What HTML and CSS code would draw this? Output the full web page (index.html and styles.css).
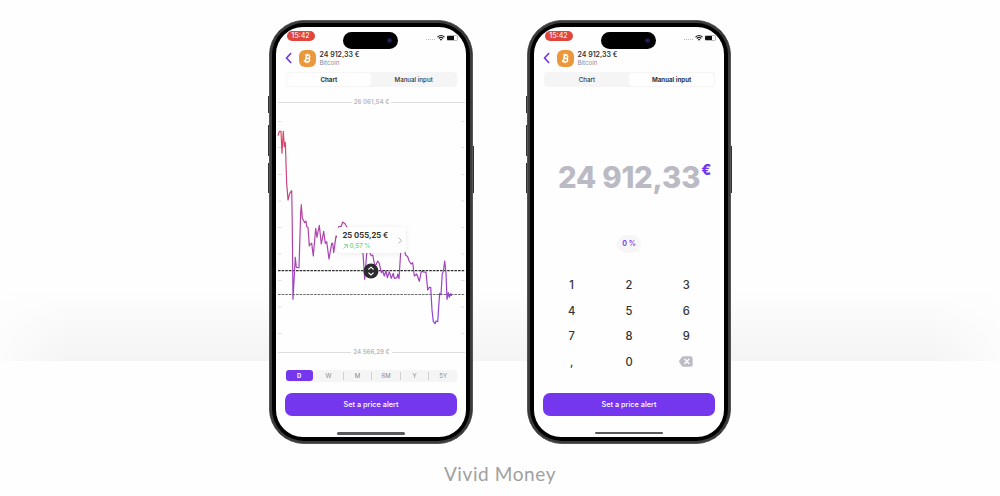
FILE: index.html
```html
<!DOCTYPE html>
<html lang="en">

<head>
    <meta charset="utf-8">
    <meta name="viewport" content="width=device-width, initial-scale=1.0">
    <title>Vivid Money</title>
    <link rel="stylesheet" href="styles.css">
</head>

<body>

    <!-- icons used on both phones -->
    <svg class="sprite" width="0" height="0">
        <symbol id="wifi" viewBox="0 0 16 12">
            <path d="M1 4.200C5 .4 11 .4 15 4.200M3.500 7c2.600-2.400 6.400-2.400 9 0" fill="none" stroke="#222" stroke-width="2.300" />
            <path d="M5.500 8.800c1.500-1.300 3.500-1.300 5 0L8 11.500z" fill="#222" />
        </symbol>
        <symbol id="back" viewBox="0 0 7 12">
            <path d="M5.700 1.500 1.500 6l4.200 4.500" fill="none" stroke="#7437ee" stroke-width="1.700" stroke-linecap="round" stroke-linejoin="round" />
        </symbol>
        <symbol id="bitcoin" viewBox="0 0 17 17">
            <g transform="rotate(13 8.500 8.500)" fill="none" stroke="#fff">
                <path d="M6.900 5.300v6.400M5.500 5.300h3.400c2 0 2 3 0 3H7h2.200c2.300 0 2.300 3.400 0 3.400H5.500" stroke-width="1.400" />
                <path d="M7.400 3.700v1.500M9.200 3.700v1.500M7.400 11.800v1.500M9.200 11.800v1.500" stroke-width=".9" />
            </g>
        </symbol>
    </svg>

    <main>
        <section class="phones">

            <article class="phone">
                <span class="side-button action"></span>
                <span class="side-button volume-up"></span>
                <span class="side-button volume-down"></span>
                <span class="side-button power"></span>

                <div class="screen">
                    <div class="status">
                        <span class="time">15:42</span>
                        <span class="island"><i class="lens"></i></span>
                        <span class="signals">
                            <i class="dots"></i>
                            <svg class="wifi"><use href="#wifi" /></svg>
                            <i class="battery"></i>
                        </span>
                    </div>

                    <header>
                        <svg class="back"><use href="#back" /></svg>
                        <span class="coin"><svg width="17" height="17"><use href="#bitcoin" /></svg></span>
                        <div>
                            <h2>24 912,33 €</h2>
                            <p>Bitcoin</p>
                        </div>
                    </header>

                    <nav class="tabs">
                        <span class="selected">Chart</span>
                        <span>Manual input</span>
                    </nav>

                    <div class="chart">
                        <div class="limit"><span>26 061,54 €</span></div>

                        <svg class="graph" viewBox="276 107 190 240" width="190" height="240">
                            <defs>
                                <linearGradient id="heat" gradientUnits="userSpaceOnUse" x1="0" y1="130" x2="0" y2="325">
                                    <stop offset="0" stop-color="#dc4660" />
                                    <stop offset=".45" stop-color="#b544a2" />
                                    <stop offset=".8" stop-color="#9c42c4" />
                                    <stop offset="1" stop-color="#8b42d8" />
                                </linearGradient>
                            </defs>
                            <path class="ticks" d="M278 121.500h3.500M278 147.500h3.500M278 174.500h3.500M278 201h3.500M278 227.500h3.500M278 254h3.500M278 280.500h3.500M278 307h3.500M278 333.500h3.500M461 121.500h3.500M461 147.500h3.500M461 174.500h3.500M461 201h3.500M461 227.500h3.500M461 254h3.500M461 280.500h3.500M461 307h3.500M461 333.500h3.500" />
                            <path class="level now" d="M278 294.500h187" />
                            <path class="level" d="M278 270.600h187" />
                            <path class="price" stroke="url(#heat)" d="M278 135.700 279.300 131.300 281 131.300 282 153.300 283.300 131.300 284.300 146.700 285.300 142.300 286.700 183.300 288 200 289.700 193.300 291.700 190.700 292.200 220 293 299.300 295.300 257.300 296.300 267.300 299 267.700 300.700 212 301.300 204.700 302.300 218 304.700 222.700 306 221 306.700 226.700 308 227.300 309.300 246 310.300 244 311.700 243.300 313.300 256 315.700 228.300 317 237.300 319.300 225.300 321.300 244 323.700 231.300 325.300 243.300 326.700 241.700 329 259 331.700 243.300 332.700 243.300 333.700 252.700 336 236 337.300 237.300 338.700 226.700 341 226.700 342.700 222 345 223.700 346.700 226.700 350 238 358 240 363 253.300 364.700 279.300 366.700 253 369.300 252 371.300 255.700 372.700 255 375 266.700 377.700 261 379.300 263.300 381.300 272.700 382.700 271 384.300 276 386 270.700 387.300 277.700 389.300 271.700 391.300 278.300 393.300 273.300 394.300 278.300 397 277.700 397.700 274 399 278.700 400 263 400.700 251.700 402.500 245 404.700 251.700 405.700 255 407.700 256.700 409 260.700 411 264 412.700 262.700 414.300 276 416.700 274 419.300 281.300 421.300 271.300 426 272.300 427.700 290 429.300 287.300 430.700 287.300 432 310 433.300 321.700 435 323.700 436 321 437.700 321.700 438.700 306.700 439.700 293.300 441 294.700 442.300 273.300 443.300 271.700 444.700 261 446 273.300 447 299.300 448.300 292.700 449.300 297.300 450.300 294 451.700 294.700" />
                            <circle cx="451" cy="294.700" r="1.300" fill="#8b40d6" />
                            <circle cx="371" cy="271" r="7.500" fill="#2c2b2e" />
                            <path d="m368.400 269.500 2.600-2.300 2.600 2.300M368.400 272.700l2.600 2.300 2.600-2.300" fill="none" stroke="#fff" stroke-width="1.100" />
                        </svg>

                        <div class="limit"><span>24 566,29 €</span></div>

                        <div class="tooltip">
                            <div>
                                <strong>25 055,25 €</strong>
                                <small>
                                    <svg width="5" height="5" viewBox="0 0 5 5"><path d="M.5 4.500l3.700-3.700M1 .6h3.400V4" fill="none" stroke="#7fd67b" stroke-width=".9" /></svg>
                                    0,57 %
                                </small>
                            </div>
                            <svg width="4" height="7" viewBox="0 0 4 7"><path d="m.6.6 2.800 2.900L.6 6.400" fill="none" stroke="#a8a8b0" stroke-width=".9" /></svg>
                        </div>
                    </div>

                    <nav class="ranges">
                        <span class="selected">D</span>
                        <span>W</span>
                        <span>M</span>
                        <span>6M</span>
                        <span>Y</span>
                        <span>5Y</span>
                    </nav>

                    <button>Set a price alert</button>
                    <span class="home"></span>
                </div>
            </article>

            <article class="phone input">
                <span class="side-button action"></span>
                <span class="side-button volume-up"></span>
                <span class="side-button volume-down"></span>
                <span class="side-button power"></span>

                <div class="screen">
                    <div class="status">
                        <span class="time">15:42</span>
                        <span class="island"><i class="lens"></i></span>
                        <span class="signals">
                            <i class="dots"></i>
                            <svg class="wifi"><use href="#wifi" /></svg>
                            <i class="battery"></i>
                        </span>
                    </div>

                    <header>
                        <svg class="back"><use href="#back" /></svg>
                        <span class="coin"><svg width="17" height="17"><use href="#bitcoin" /></svg></span>
                        <div>
                            <h2>24 912,33 €</h2>
                            <p>Bitcoin</p>
                        </div>
                    </header>

                    <nav class="tabs">
                        <span>Chart</span>
                        <span class="selected">Manual input</span>
                    </nav>

                    <div class="amount"><span>24 912,33</span><sup>€</sup></div>
                    <div class="percent">0 %</div>

                    <div class="keypad">
                        <span>1</span>
                        <span>2</span>
                        <span>3</span>
                        <span>4</span>
                        <span>5</span>
                        <span>6</span>
                        <span>7</span>
                        <span>8</span>
                        <span>9</span>
                        <span>,</span>
                        <span>0</span>
                        <span>
                            <svg width="14" height="11" viewBox="0 0 14 11">
                                <path d="M4.200.3h7.300q2.200 0 2.200 2.200v6q0 2.200-2.200 2.200H4.200q-.8 0-1.400-.7L.4 6.500q-.7-1 0-2L2.800 1q.6-.7 1.400-.7z" fill="#bdbcc6" />
                                <path d="m5.700 3.300 4.200 4.200m0-4.200L5.700 7.500" stroke="#fff" stroke-width="1.400" stroke-linecap="round" />
                            </svg>
                        </span>
                    </div>

                    <button>Set a price alert</button>
                    <span class="home"></span>
                </div>
            </article>

        </section>

        <h1>Vivid Money</h1>
    </main>

</body>

</html>
```
FILE: styles.css
```css
* {
    box-sizing: border-box;
}

body {
    margin: 0;
    background-color: #fefefe;
    font-family: Inter, sans-serif;
    color: #333;
}

.sprite {
    position: absolute;
}

main {
    height: 496px;
    overflow: hidden;
    /* soft floor behind the phones, faded out at both sides */
    background-image:
        linear-gradient(to right, rgba(254, 254, 254, 0.75) 0, transparent 70px, transparent 930px, rgba(254, 254, 254, 0.75) 100%),
        linear-gradient(#fefefe, #f4f4f4);
    background-size: 100% 71px;
    background-position: 0 290px;
    background-repeat: no-repeat;
}

.phones {
    display: flex;
    justify-content: center;
    gap: 54px;
    padding-top: 20px;
}

h1 {
    margin: 17px 0 0;
    text-align: center;
    font-family: Lato, sans-serif;
    font-size: 19px;
    line-height: 26px;
    font-weight: 400;
    letter-spacing: 0.6px;
    color: #a0a0a0;
}

/* phone */

.phone {
    position: relative;
    width: 204px;
    height: 424px;
    padding: 6px;
    border: 1px solid #555;
    border-radius: 35px;
    background-color: #000;
    box-shadow: inset 0 0 0 2px #3c3e3d;
}

.screen {
    display: flex;
    flex-direction: column;
    width: 190px;
    height: 410px;
    border-radius: 27px;
    overflow: hidden;
    background-color: #fefefe;
}

.side-button {
    position: absolute;
    left: -2px;
    width: 1px;
    background-color: #333;
}

.action {
    top: 75px;
    height: 17px;
}

.volume-up {
    top: 104px;
    height: 31px;
}

.volume-down {
    top: 142px;
    height: 30px;
}

.power {
    left: auto;
    right: -2px;
    top: 125px;
    height: 47px;
}

.status {
    display: grid;
    grid-template-columns: 67px 55px 1fr;
    height: 22px;
    padding-top: 3px;
}

.time {
    width: 28px;
    height: 10px;
    margin: 1px 0 0 10.500px;
    border-radius: 5px;
    background-color: #e0463b;
    color: #fff;
    font-size: 7.200px;
    line-height: 10px;
    text-align: center;
}

.island {
    display: flex;
    align-items: center;
    justify-content: flex-end;
    height: 16.500px;
    margin-top: 2px;
    padding-right: 6px;
    border-radius: 9px;
    background-color: #000;
}

.lens {
    width: 5px;
    height: 5px;
    border-radius: 50%;
    background: radial-gradient(#262672, #0a0a20);
}

.signals {
    display: flex;
    align-items: center;
    height: 15px;
    padding-left: 28px;
}

.dots {
    width: 9px;
    margin-top: 3px;
    border-top: 1.200px dotted #bbb;
}

.wifi {
    width: 8px;
    height: 6px;
    margin: 0 2px;
}

.battery {
    width: 11px;
    height: 6px;
    border: 1px solid #bbb;
    border-left-color: #111;
    border-radius: 2px;
    background: linear-gradient(to right, #111 65%, #fff 65%);
}

header {
    display: flex;
    align-items: center;
    height: 18px;
    padding-left: 9px;
}

.back {
    width: 7px;
    height: 12px;
    margin-right: 7px;
}

.coin {
    display: flex;
    width: 17px;
    height: 17px;
    margin-right: 3.500px;
    border-radius: 6px;
    background-color: #ea983e;
}

h2,
p {
    margin: 0;
    font-size: 7px;
    line-height: 9px;
    font-weight: 600;
}

p {
    font-size: 6.200px;
    line-height: 8px;
    font-weight: 400;
    color: #8b8b90;
}

.tabs {
    display: grid;
    grid-template-columns: 1fr 1fr;
    height: 15px;
    margin: 5px 9px 0 9.500px;
    padding: 1px;
    border-radius: 4px;
    background-color: #f5f5f5;
    font-size: 6.200px;
    line-height: 13px;
    font-weight: 500;
    text-align: center;
}

.tabs .selected {
    border-radius: 4px;
    background-color: #fefefe;
    font-weight: 700;
}

button {
    height: 23px;
    margin: 11px 9px 0;
    padding: 0;
    border: none;
    border-radius: 7px;
    background-color: #7437ee;
    color: #fff;
    font-family: Inter, sans-serif;
    font-size: 7.300px;
    font-weight: 500;
    flex-shrink: 0;
}

.home {
    align-self: center;
    width: 68px;
    height: 2.500px;
    margin-top: 16px;
    border-radius: 2px;
    background-color: #59595b;
}

/* chart */

.chart {
    position: relative;
    margin-top: 10px;
}

.limit {
    display: flex;
    align-items: center;
    gap: 2px;
    height: 10px;
    padding: 0 1px 0 2px;
    color: #b9b9bd;
    font-size: 6.200px;
    font-weight: 600;
    line-height: 10px;
}

.limit::before,
.limit::after {
    content: "";
    flex: 1;
    height: 1px;
    background-color: #dededf;
}

.graph {
    display: block;
}

.ticks {
    stroke: #d8d8da;
    stroke-width: 0.8;
}

.level {
    stroke: #2e2e30;
    stroke-width: 1.1;
    stroke-dasharray: 2.6 1;
}

.now {
    stroke: #6c6c6e;
}

.price {
    fill: none;
    stroke-width: 1.2;
    stroke-linejoin: round;
}

.tooltip {
    position: absolute;
    left: 61px;
    top: 130px;
    display: flex;
    align-items: center;
    justify-content: space-between;
    width: 69px;
    height: 26px;
    padding: 1px 4px 0 5.500px;
    border-radius: 4px;
    background-color: #fefefe;
    box-shadow: 0 1px 6px rgba(0, 0, 0, 0.08);
}

.tooltip strong {
    display: block;
    margin-top: 1px;
    font-size: 7.700px;
    line-height: 10px;
    font-weight: 700;
    white-space: nowrap;
}

.tooltip small {
    display: flex;
    align-items: center;
    gap: 2px;
    font-size: 6.200px;
    line-height: 10px;
    font-weight: 600;
    color: #7fd67b;
}

.ranges {
    display: grid;
    grid-template-columns: repeat(6, 1fr);
    align-items: center;
    height: 12px;
    margin: 13px 9px 0 9.500px;
    border-radius: 3px;
    background-color: #f5f5f5;
    color: #85858a;
    font-size: 6px;
    line-height: 8px;
    text-align: center;
}

.ranges span + span + span {
    border-left: 1px solid #cfcfd2;
}

.ranges .selected {
    align-self: start;
    height: 11px;
    margin-right: 1px;
    border-radius: 3px;
    background-color: #7437ee;
    color: #fff;
    font-weight: 700;
    line-height: 11px;
}

/* manual input */

.amount {
    display: flex;
    height: 40px;
    margin: 71px 0 0 24px;
    color: #bbbac4;
    font-size: 29.300px;
    line-height: 40px;
    font-weight: 800;
    letter-spacing: -0.2px;
    white-space: nowrap;
}

.amount sup {
    margin-left: 1px;
    color: #7437ee;
    font-size: 14.500px;
    line-height: 24px;
}

.percent {
    align-self: center;
    width: 24px;
    height: 18px;
    margin-top: 37px;
    border-radius: 9px;
    background-color: #f6f6f6;
    color: #8246e8;
    font-size: 7px;
    line-height: 18px;
    font-weight: 700;
    text-align: center;
}

.keypad {
    display: grid;
    grid-template-columns: repeat(3, 57.300px);
    grid-auto-rows: 25.700px;
    justify-content: center;
    align-items: center;
    margin-top: 19px;
    font-size: 11.200px;
    font-weight: 500;
    text-align: center;
}

.keypad svg {
    display: block;
    margin: 0 auto;
}

.input button {
    margin-top: 18px;
}
```
